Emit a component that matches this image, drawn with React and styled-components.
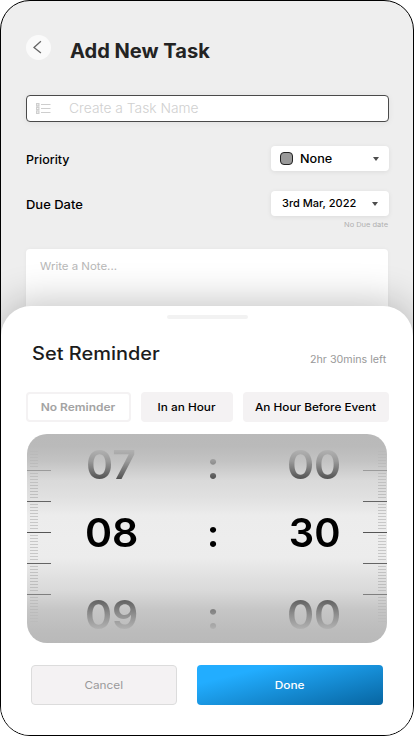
import React from "react";
import styled, { createGlobalStyle } from "styled-components";

const GlobalStyle = createGlobalStyle`
  *, *::before, *::after { box-sizing: border-box; }
  body { margin: 0; background: #fff; }
  button { font: inherit; margin: 0; padding: 0; }
`;

const Phone = styled.main`
  width: 414px;
  height: 736px;
  overflow: hidden;
  display: flex;
  flex-direction: column;
  border: 1px solid #000;
  border-radius: 30px;
  background: #eee;
  font-family: Inter, "Noto Sans", sans-serif;
`;

const Label = styled.span`
  display: block;
  flex: none;
  font-size: ${(p) => p.$size}px;
  font-weight: ${(p) => p.$weight || 400};
  line-height: 1;
  color: ${(p) => p.$color || "#000"};
  white-space: nowrap;
  transform: translateY(1px) scaleX(${(p) => p.$stretch || 1});
  transform-origin: ${(p) => p.$origin || "left"} center;
`;

const Header = styled.header`
  display: flex;
  flex: none;
  height: 94px;
  padding: 34px 25px 0;
  gap: 19px;
`;

const BackButton = styled.button`
  display: flex;
  width: 25px;
  height: 25px;
  border: 0;
  border-radius: 50%;
  background: #fafafa;
`;

const Title = styled.h1`
  margin: 6px 0 0;
`;

const TaskField = styled.div`
  display: flex;
  flex: none;
  align-items: center;
  gap: 18px;
  width: 363px;
  height: 27px;
  margin-left: 25px;
  padding: 0 9px;
  border: 1px solid #4a4a4a;
  border-radius: 4px;
  background: #fff;
  box-shadow: 0 1px 6px rgba(0, 0, 0, 0.06);
`;

const OptionRow = styled.div`
  display: flex;
  flex: none;
  align-items: center;
  justify-content: space-between;
  height: 25px;
  margin: ${(p) => p.$top}px 24px 0 25px;
`;

const Dropdown = styled.div`
  display: flex;
  align-items: center;
  width: 118px;
  height: 25px;
  padding: 0 ${(p) => p.$right}px 0 ${(p) => p.$left}px;
  border-radius: 4px;
  background: #fff;
  box-shadow: 0 1px 5px rgba(0, 0, 0, 0.08);
`;

const Swatch = styled.span`
  width: 13px;
  height: 13px;
  margin-right: 7px;
  border: 1px solid #222;
  border-radius: 4px;
  background: #999;
`;

const Caret = styled.span`
  margin-left: auto;
  border: 3px solid transparent;
  border-top: 4px solid #4d4d4d;
  border-bottom: 0;
`;

const DueHint = styled.div`
  display: flex;
  flex: none;
  justify-content: flex-end;
  height: 33px;
  padding: 5px 25px 0 0;
`;

const NoteArea = styled.div`
  flex: none;
  width: 362px;
  height: 100px;
  margin-left: 25px;
  padding: 12px 14px;
  border-radius: 4px;
  background: #fff;
  box-shadow: 0 0 4px rgba(0, 0, 0, 0.04);
`;

const Sheet = styled.section`
  flex: none;
  position: relative;
  display: flex;
  flex-direction: column;
  height: 430px;
  margin-top: -43px;
  border-radius: 30px 30px 0 0;
  background: #fff;
  box-shadow: 0 -4px 38px rgba(0, 0, 0, 0.24);
`;

const Handle = styled.div`
  flex: none;
  width: 81px;
  height: 4px;
  margin: 8.5px 0 0 165.5px;
  border-radius: 2px;
  background: #f2f2f2;
`;

const SheetHeader = styled.div`
  display: flex;
  flex: none;
  justify-content: space-between;
  height: 73.5px;
  padding: 25px 26.5px 0 30.5px;
`;

const SheetTitle = styled.h2`
  margin: 0;
`;

const TimeLeft = styled.div`
  padding-top: 9px;
`;

const Presets = styled.div`
  display: flex;
  flex: none;
  gap: 10px;
  height: 30px;
  padding-left: 25px;
`;

const Preset = styled.button`
  display: flex;
  align-items: center;
  justify-content: center;
  width: ${(p) => p.$width}px;
  border: ${(p) => (p.$outlined ? "2px solid #f4f2f3" : "0")};
  border-radius: 4px;
  background: ${(p) => (p.$outlined ? "#fff" : "#f4f2f3")};
`;

const Picker = styled.div`
  display: flex;
  flex: none;
  width: 360px;
  height: 209px;
  margin: 12px 0 0 26px;
  overflow: hidden;
  border-radius: 20px;
  background: linear-gradient(
    #b9b9b9 0%, #bababa 6%, #c3c3c3 13%, #d9d9d9 22%, #e0e0e0 30%, #ececec 39%,
    #ededed 50%, #ececec 59%, #e0e0e0 69%, #d9d9d9 75%, #c6c6c6 84%, #bcbcbc 94%, #b9b9b9 100%
  );
`;

const Times = styled.div`
  display: flex;
  flex-direction: column;
  flex: none;
  width: 312px;
`;

const fills = {
  above: "linear-gradient(#b0b0b0 12%, #999 40%, #505050 88%)",
  current: "linear-gradient(#000, #000)",
  below: "linear-gradient(#636363 12%, #909090 50%, #b2b2b2 88%)",
};

const TimeRow = styled.div`
  display: grid;
  grid-template-columns: 119px 84px 119px;
  justify-content: center;
  justify-items: center;
  height: 38px;
  margin-top: ${(p) => p.$top}px;
  padding-left: 12px;
`;

const Digit = styled.span`
  font-size: ${(p) => p.$size || 39.5}px;
  font-weight: 600;
  line-height: 38px;
  color: transparent;
  background: ${(p) => fills[p.$fill]};
  background-clip: text;
  -webkit-background-clip: text;
  transform: scaleX(${(p) => p.$stretch || 1.04});
`;

const Actions = styled.footer`
  display: flex;
  flex: none;
  gap: 20px;
  height: 40px;
  margin: 22px 0 0 30px;
`;

const Action = styled.button`
  display: flex;
  align-items: center;
  justify-content: center;
  width: ${(p) => (p.$primary ? 186 : 146)}px;
  border: ${(p) => (p.$primary ? "0" : "1px solid #dcdcdc")};
  border-radius: 4px;
  background: ${(p) =>
    p.$primary ? "linear-gradient(166deg, #22adff 22%, #0765a1 100%)" : "#f4f2f3"};
`;

const RulerSvg = styled.svg`
  flex: none;
`;

const BackIcon = () => (
  <svg width="25" height="25" viewBox="0 0 25 25" fill="none">
    <path d="M14.9 6.2 8 12.4l6.9 5.7" stroke="#666" strokeWidth="1.3" />
  </svg>
);

const ListIcon = () => (
  <svg width="15" height="11" viewBox="0 0 15 11" fill="none" stroke="#cecece">
    <path d="M5 1.5h9.5M5 5.5h9.5M5 9.5h9.5" strokeWidth="1" />
    <path d="M.6.6h2.3v2.3H.6zM.6 4.3h2.3v2.3H.6zM.6 8h2.3v2.3H.6z" strokeWidth="1.2" />
  </svg>
);

const majors = [36.5, 67.5, 98.5, 129.5, 160.5];
const majorOpacity = [0.42, 0.9, 1, 0.9, 0.68];
const minors = [5.5, ...majors].flatMap((start) =>
  Array.from({ length: 9 }, (_, i) => start + 3 * (i + 1))
).filter((y) => y > 17 && y < 189);

const Ruler = ({ side }) => {
  const minorX = side === "left" ? 3 : 15;
  return (
    <RulerSvg width="24" height="209" viewBox="0 0 24 209">
      {minors.map((y) => (
        <rect
          key={y}
          x={minorX}
          y={y - 0.5}
          width="8"
          height="1"
          fill="#8c8c8c"
          opacity={0.38 * Math.min(1, (y - 10) / 45, (196 - y) / 45)}
        />
      ))}
      {majors.map((y, i) => (
        <rect key={y} x="0" y={y - 0.5} width="24" height="1" fill="#555" opacity={majorOpacity[i]} />
      ))}
    </RulerSvg>
  );
};

const Time = ({ hour, minute, fill, top, minuteStretch }) => (
  <TimeRow $top={top}>
    <Digit $fill={fill}>{hour}</Digit>
    <Digit $fill={fill} $size={38}>:</Digit>
    <Digit $fill={fill} $stretch={minuteStretch}>{minute}</Digit>
  </TimeRow>
);

export default function App() {
  return (
    <>
      <GlobalStyle />
      <Phone>
        <Header>
          <BackButton aria-label="Back">
            <BackIcon />
          </BackButton>
          <Title>
            <Label $size={19.4} $weight={700} $stretch={1.035} $color="#232323">Add New Task</Label>
          </Title>
        </Header>
        <TaskField>
          <ListIcon />
          <Label $size={12.9} $weight={300} $stretch={1.07} $color="#d0d0d0">Create a Task Name</Label>
        </TaskField>
        <OptionRow $top={24}>
          <Label $size={11.9} $weight={500} $stretch={1.05}>Priority</Label>
          <Dropdown $left={9} $right={10}>
            <Swatch />
            <Label $size={11.8} $weight={500} $stretch={1.07}>None</Label>
            <Caret />
          </Dropdown>
        </OptionRow>
        <OptionRow $top={20}>
          <Label $size={11.9} $weight={500} $stretch={1.09}>Due Date</Label>
          <Dropdown $left={10.5} $right={11}>
            <Label $size={10.8} $weight={500} $stretch={1.02}>3rd Mar, 2022</Label>
            <Caret />
          </Dropdown>
        </OptionRow>
        <DueHint>
          <Label $size={6.8} $stretch={1.1} $origin="right" $color="#b0b0b0">No Due date</Label>
        </DueHint>
        <NoteArea>
          <Label $size={10.8} $stretch={1.06} $color="#b7b7b7">Write a Note...</Label>
        </NoteArea>
        <Sheet>
          <Handle />
          <SheetHeader>
            <SheetTitle>
              <Label $size={18} $weight={500} $stretch={1.11} $color="#1c1c1c">Set Reminder</Label>
            </SheetTitle>
            <TimeLeft>
              <Label $size={10} $stretch={1.07} $origin="right" $color="#999">2hr 30mins left</Label>
            </TimeLeft>
          </SheetHeader>
          <Presets>
            <Preset $width={105} $outlined>
              <Label $size={10.6} $weight={600} $stretch={1.13} $origin="center" $color="#a3a3a3">No Reminder</Label>
            </Preset>
            <Preset $width={92}>
              <Label $size={10.8} $weight={500} $stretch={1.09} $origin="center">In an Hour</Label>
            </Preset>
            <Preset $width={146}>
              <Label $size={10.8} $weight={500} $stretch={1.09} $origin="center">An Hour Before Event</Label>
            </Preset>
          </Presets>
          <Picker>
            <Ruler side="left" />
            <Times>
              <Time hour="07" minute="00" fill="above" top={12} />
              <Time hour="08" minute="30" fill="current" top={30} minuteStretch={1.01} />
              <Time hour="09" minute="00" fill="below" top={44} />
            </Times>
            <Ruler side="right" />
          </Picker>
          <Actions>
            <Action>
              <Label $size={10.8} $stretch={1.09} $origin="center" $color="#999">Cancel</Label>
            </Action>
            <Action $primary>
              <Label $size={10.8} $weight={500} $stretch={1.1} $origin="center" $color="#fff">Done</Label>
            </Action>
          </Actions>
        </Sheet>
      </Phone>
    </>
  );
}
